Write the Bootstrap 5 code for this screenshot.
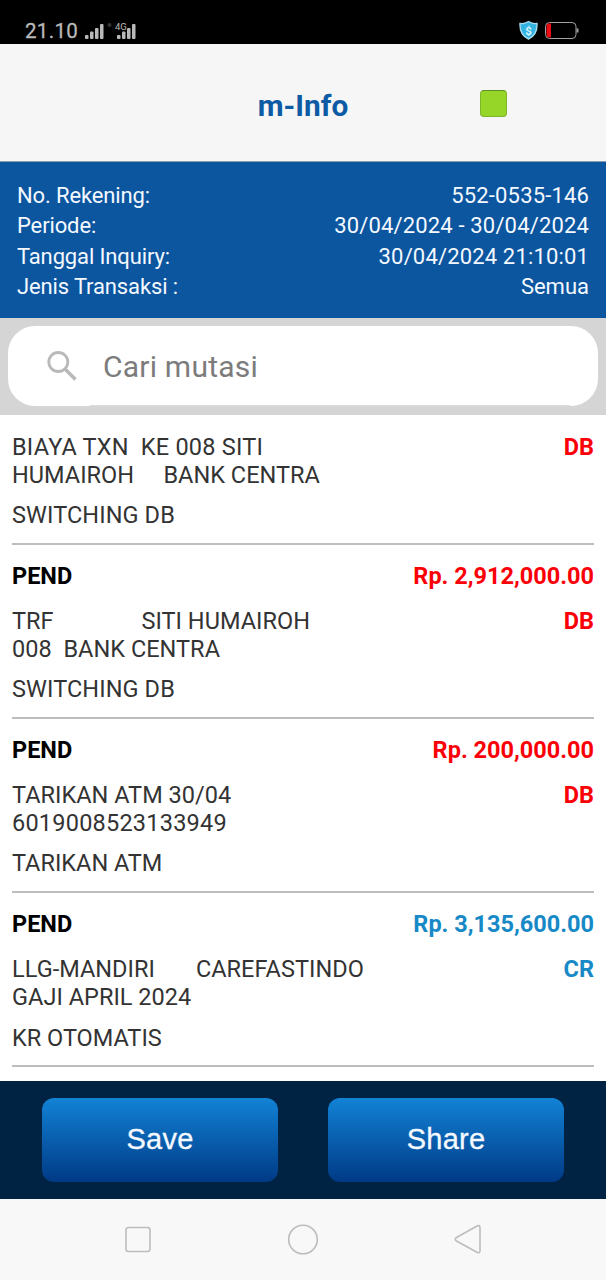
<!DOCTYPE html>
<html lang="id">
<head>
<meta charset="utf-8">
<meta name="viewport" content="width=device-width, initial-scale=1">
<title>m-Info</title>
<link href="https://cdn.jsdelivr.net/npm/bootstrap@5.3.0/dist/css/bootstrap.min.css" rel="stylesheet">
<script src="https://cdn.jsdelivr.net/npm/bootstrap@5.3.0/dist/js/bootstrap.bundle.min.js"></script>
<style>
body{font-family:Roboto,"Liberation Sans",sans-serif;width:606px;height:1280px;overflow:hidden;background:#fff}
svg{display:block;flex:none}
.status{height:44px;background:#000;padding:17px 26px 0 25px;color:#b9b9b9}
.clock{font-size:20.5px;line-height:29px;letter-spacing:.35px;width:60px;-webkit-text-stroke:.3px}
.topbar{height:118px;background:#f6f6f6;border-bottom:1px solid #8b9cad;padding-top:7px}
.topbar h1{font-size:29.8px;line-height:36px;font-weight:700;color:#0c5ba4;margin:0}
.lamp{width:27px;height:27px;border-radius:4px;background:#96d629;border:1px solid #7fb52a;border-top-color:#5f8f20}
.info{height:156px;background:#0c559f;color:#f4f9ff;padding:19px 17px 0;font-size:22px;line-height:30.3px}
.info .label{letter-spacing:-.13px}
.info .value{letter-spacing:.16px}
.searchwrap{height:97px;background:#d5d5d5;padding:8px 8px 9px}
.searchbox{height:80px;border-radius:27px;background:#fff;padding-left:38px}
.searchbox input{border:0;padding:0 0 0 13px;margin-left:12px;height:80px;font-size:30px;letter-spacing:.22px;color:#777;background:none;box-shadow:inset 0 -1px #ddd;width:480px;outline:0}
.searchbox input::placeholder{color:#7c7c7c;opacity:1}
.mutasi{height:666px;padding:.7px 12px 0;font-size:23.5px;line-height:28px;color:#333}
.trx{border-bottom:2px solid #bdbdbd;padding:17px 0 13.8px}
.trx .desc{white-space:pre;margin-bottom:12.4px;letter-spacing:.03px}
.trx .kind{letter-spacing:.1px}
.trx .loose{letter-spacing:.22px}
.trx .head{margin-bottom:17px;color:#000}
.debit{color:#fb0007}.credit{color:#1689c6}
.actions{height:118px;background:#002243;padding:17px 42px 0}
.actions .btn{width:236px;height:84px;border:0;border-radius:12px;background:linear-gradient(#1282d5,#003a86);color:#f4f9ff;font:29px/80px "Liberation Sans",sans-serif;letter-spacing:.25px;padding:0 0 3px;-webkit-text-stroke:.3px}
.sysnav{height:81px;background:#f8f8f8;padding-bottom:2px}
</style>
</head>
<body>
<div class="status d-flex justify-content-between">
  <div class="d-flex">
    <span class="clock">21.10</span>
    <svg width="56" height="24" viewBox="0 0 56 24" fill="#b9b9b9">
      <rect y="18" width="3.500" height="4" rx="1"/><rect x="5" y="14.500" width="3.500" height="7.500" rx="1"/><rect x="10" y="11" width="3.500" height="11" rx="1"/><rect x="15" y="7" width="3.500" height="15" rx="1"/>
      <circle cx="24.500" cy="8" r="2" fill="#333"/>
      <rect x="32" y="18" width="3.500" height="4" rx="1"/><rect x="37" y="14.500" width="3.500" height="7.500" rx="1"/><rect x="42" y="11" width="3.500" height="11" rx="1"/><rect x="47" y="7" width="3.500" height="15" rx="1"/>
      <text x="30" y="13" font-size="9.500" stroke="#000" stroke-width="1.500" paint-order="stroke">4G</text>
    </svg>
  </div>
  <div class="d-flex">
    <svg width="61" height="24" viewBox="0 0 61 24">
      <path d="M9.500 4.500Q13.500 7 18 6.500Q18.500 18 9.500 22Q0.500 18 1 6.500Q5.500 7 9.500 4.500Z" fill="#35b4e3" stroke="#a7dcef" stroke-width="1.400"/>
      <text x="9.500" y="17.500" font-size="11.500" font-weight="700" fill="#d9f5ff" text-anchor="middle">$</text>
      <rect x="26.500" y="5.500" width="30.500" height="16" rx="4" fill="none" stroke="#a2a2a2"/>
      <path d="M29 6.500H32V20.500H30Q27.500 20 27.500 18V9Q27.500 7 29 6.500Z" fill="#ec0b12"/>
      <rect x="57.500" y="11.500" width="2" height="4" fill="#a2a2a2"/>
    </svg>
  </div>
</div>
<header class="topbar d-flex align-items-center justify-content-center position-relative">
  <h1>m-Info</h1>
  <span class="lamp position-absolute" style="left:479.500px;top:46px"></span>
</header>
<section class="info">
  <div class="d-flex justify-content-between"><span class="label">No. Rekening:</span><span class="value">552-0535-146</span></div>
  <div class="d-flex justify-content-between"><span class="label">Periode:</span><span class="value">30/04/2024 - 30/04/2024</span></div>
  <div class="d-flex justify-content-between"><span class="label">Tanggal Inquiry:</span><span class="value">30/04/2024 21:10:01</span></div>
  <div class="d-flex justify-content-between"><span class="label">Jenis Transaksi :</span><span>Semua</span></div>
</section>
<div class="searchwrap">
  <div class="searchbox d-flex align-items-center">
    <svg width="32" height="32" viewBox="0 0 32 32" fill="none" stroke="#b9b9b9" stroke-width="2.800"><circle cx="12.300" cy="12" r="9.500"/><path d="M19 19L29.500 29.500" stroke-width="3.600"/></svg>
    <input type="text" placeholder="Cari mutasi">
  </div>
</div>
<main class="mutasi">
  <div class="trx">
    <div class="d-flex justify-content-between"><div class="desc"><span class="loose">BIAYA TXN  KE 008 SITI</span>
HUMAIROH     BANK CENTRA</div><b class="debit">DB</b></div>
    <div class="kind">SWITCHING DB</div>
  </div>
  <div class="trx">
    <div class="head d-flex justify-content-between"><b>PEND</b><b class="debit">Rp. 2,912,000.00</b></div>
    <div class="d-flex justify-content-between"><div class="desc">TRF               SITI HUMAIROH
008  BANK CENTRA</div><b class="debit">DB</b></div>
    <div class="kind">SWITCHING DB</div>
  </div>
  <div class="trx">
    <div class="head d-flex justify-content-between"><b>PEND</b><b class="debit">Rp. 200,000.00</b></div>
    <div class="d-flex justify-content-between"><div class="desc">TARIKAN ATM 30/04
<span class="loose">6019008523133949</span></div><b class="debit">DB</b></div>
    <div>TARIKAN ATM</div>
  </div>
  <div class="trx">
    <div class="head d-flex justify-content-between"><b>PEND</b><b class="credit">Rp. 3,135,600.00</b></div>
    <div class="d-flex justify-content-between"><div class="desc">LLG-MANDIRI       CAREFASTINDO
GAJI APRIL 2024</div><b class="credit">CR</b></div>
    <div>KR OTOMATIS</div>
  </div>
</main>
<footer class="actions d-flex justify-content-between align-items-start">
  <button class="btn" type="button">Save</button>
  <button class="btn" type="button">Share</button>
</footer>
<nav class="sysnav d-flex justify-content-center align-items-center">
  <svg width="380" height="40" viewBox="0 0 380 40" fill="none" stroke="#bdbdbd" stroke-width="1.600">
    <rect x="13" y="8.500" width="24" height="24" rx="2.500"/><circle cx="190" cy="20.500" r="14.300"/><path d="M343.500 18.500L364 7Q367 5.500 367 9V31.500Q367 35 364 33.200L343.500 22Q341 20.300 343.500 18.500Z"/>
  </svg>
</nav>
</body>
</html>
